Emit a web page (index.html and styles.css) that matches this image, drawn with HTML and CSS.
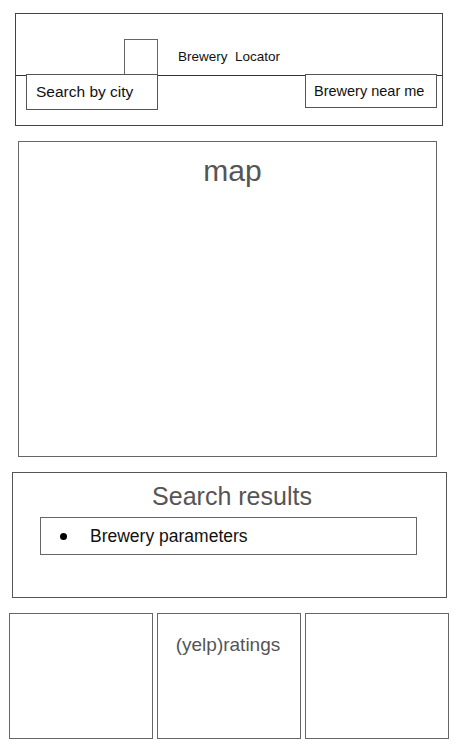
FILE: index.html
```html
<!DOCTYPE html>
<html>
<head>
<meta charset="utf-8">
<link rel="stylesheet" href="styles.css">
</head>
<body>
<header class="header">
  <div class="header-top">
    <div class="logo"></div>
    <div class="title">Brewery&nbsp; Locator</div>
  </div>
  <div class="header-actions">
    <div class="btn btn-city">Search by city</div>
    <div class="btn btn-near">Brewery near me</div>
  </div>
</header>
<section class="map">
  <div class="map-label">map</div>
</section>
<section class="results">
  <div class="results-title">Search results</div>
  <ul class="result-list">
    <li class="result-item">Brewery parameters</li>
  </ul>
</section>
<section class="tiles">
  <div class="tile"></div>
  <div class="tile"><div class="tile-label">(yelp)ratings</div></div>
  <div class="tile"></div>
</section>
</body>
</html>
```
FILE: styles.css
```css
html, body {
  margin: 0;
  padding: 0;
  background: #fff;
}
body {
  font-family: "Liberation Sans", Arial, sans-serif;
  color: #111;
  width: 458px;
  padding-top: 13px;
}
.header {
  margin-left: 15px;
  width: 426px;
  height: 111px;
  border: 1px solid #444;
}
.header-top {
  height: 61px;
  border-bottom: 1px solid #333;
  display: flex;
  align-items: flex-end;
  padding-left: 108px;
}
.logo {
  width: 32px;
  height: 35px;
  border: 1px solid #666;
  border-bottom: none;
}
.title {
  font-size: 13.5px;
  margin-left: 20px;
  align-self: flex-start;
  margin-top: 35px;
}
.header-actions {
  display: flex;
  justify-content: space-between;
  padding-left: 10px;
  padding-right: 5px;
  margin-top: -2px;
}
.btn {
  border: 1px solid #555;
  background: #fff;
  box-sizing: border-box;
  display: flex;
  align-items: center;
}
.btn-city {
  width: 132px;
  height: 36px;
  font-size: 15.5px;
  padding-left: 9px;
}
.btn-near {
  width: 132px;
  height: 34px;
  font-size: 14.5px;
  padding-left: 8px;
}
.map {
  margin: 15px 0 0 18px;
  width: 417px;
  height: 314px;
  border: 1px solid #666;
}
.map-label {
  text-align: center;
  font-size: 30px;
  color: #555;
  margin-top: 12px;
  padding-left: 10px;
}
.results {
  margin: 15px 0 0 12px;
  width: 433px;
  height: 124px;
  border: 1px solid #555;
}
.results-title {
  text-align: center;
  font-size: 25px;
  color: #555;
  margin-top: 9px;
  padding-left: 5px;
}
.result-list {
  list-style: none;
  margin: 6px 0 0 27px;
  padding: 0;
  width: 375px;
  height: 36px;
  border: 1px solid #666;
  display: flex;
  align-items: center;
}
.result-item {
  display: flex;
  align-items: center;
  font-size: 17.5px;
  color: #111;
}
.result-item::before {
  content: "";
  width: 7px;
  height: 7px;
  border-radius: 50%;
  background: #000;
  margin-left: 19px;
  margin-right: 23px;
}
.tiles {
  margin: 15px 0 0 9px;
  display: grid;
  grid-template-columns: repeat(3, 144px);
  gap: 4px;
}
.tile {
  height: 126px;
  box-sizing: border-box;
  border: 1px solid #666;
}
.tile-label {
  text-align: center;
  font-size: 19px;
  color: #555;
  margin-top: 20px;
  padding-right: 2px;
}
```
